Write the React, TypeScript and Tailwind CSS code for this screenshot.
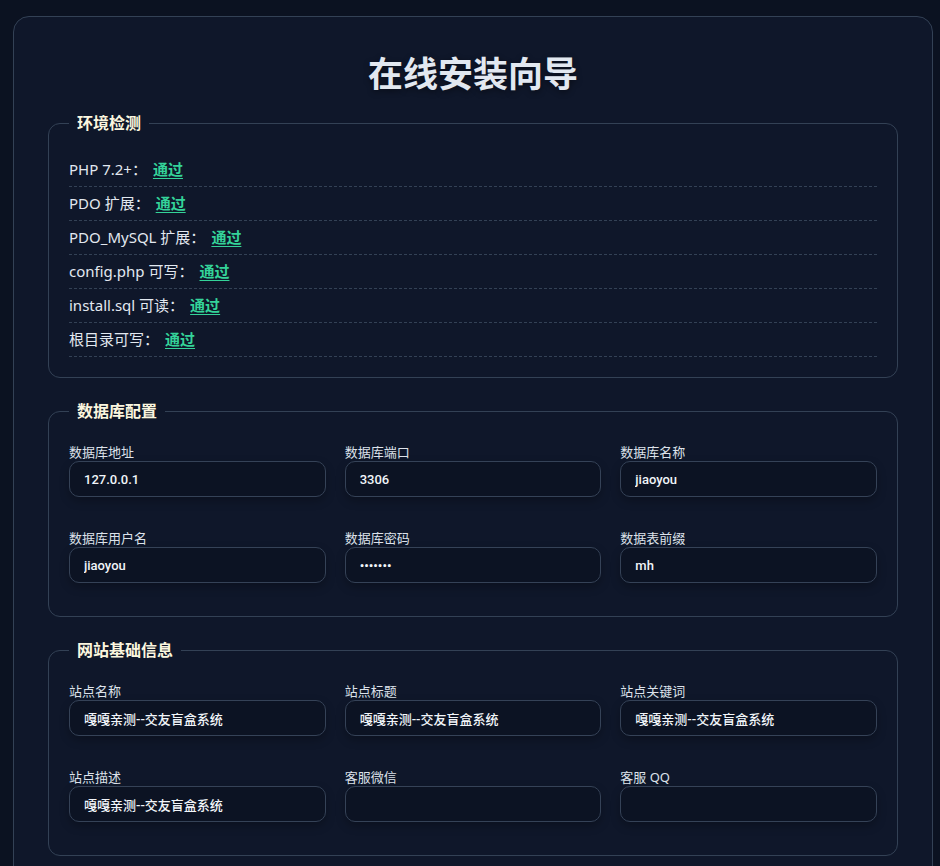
import type { ReactNode } from "react";

const CHECKS = [
  "PHP 7.2+：",
  "PDO 扩展：",
  "PDO_MySQL 扩展：",
  "config.php 可写：",
  "install.sql 可读：",
  "根目录可写：",
];

interface Field {
  label: string;
  value: string;
  type?: string;
}

const DB_FIELDS: Field[] = [
  { label: "数据库地址", value: "127.0.0.1" },
  { label: "数据库端口", value: "3306" },
  { label: "数据库名称", value: "jiaoyou" },
  { label: "数据库用户名", value: "jiaoyou" },
  { label: "数据库密码", value: "1234567", type: "password" },
  { label: "数据表前缀", value: "mh" },
];

const SITE_FIELDS: Field[] = [
  { label: "站点名称", value: "嘎嘎亲测--交友盲盒系统" },
  { label: "站点标题", value: "嘎嘎亲测--交友盲盒系统" },
  { label: "站点关键词", value: "嘎嘎亲测--交友盲盒系统" },
  { label: "站点描述", value: "嘎嘎亲测--交友盲盒系统" },
  { label: "客服微信", value: "" },
  { label: "客服 QQ", value: "" },
];

const cjk = "font-['Noto_Sans','Noto_Sans_CJK_SC',sans-serif]";

function Section({ title, children, top }: { title: string; children: ReactNode; top: string }) {
  return (
    <fieldset className={`mb-[22px] rounded-xl border border-[#334155] px-5 ${top}`}>
      <legend className="ml-0 px-2 text-base font-bold leading-[22px] text-[#fbf6df]">
        {title}
      </legend>
      {children}
    </fieldset>
  );
}

function FieldGrid({ fields }: { fields: Field[] }) {
  return (
    <div className="grid grid-cols-3 gap-x-[19px] gap-y-[32px] pb-[33px]">
      {fields.map((f) => (
        <label key={f.label} className="block">
          <span className="block text-[13px] leading-[18px] text-[#dde2ea]">{f.label}</span>
          <input
            type={f.type ?? "text"}
            defaultValue={f.value}
            className="block h-9 w-full rounded-[10px] border border-[#354257] bg-[#0c1323] px-[14px] font-['Roboto','Noto_Sans_CJK_SC',sans-serif] text-[13px] font-medium text-[#f1f5f9] shadow-[0_4px_10px_rgba(0,0,0,0.25)] outline-none"
          />
        </label>
      ))}
    </div>
  );
}

export default function App() {
  return (
    <div className={`min-h-screen bg-[#0b1221] pt-4 pl-[13px] ${cjk}`}>
      <div className="w-[920px] rounded-2xl border border-[#334155] bg-[#0f172a] px-[34px] pt-[36px] pb-10">
        <h1 className="mb-[17px] text-center text-[35px] font-bold leading-[42px] text-[#e2e8f0] [text-shadow:0_2px_6px_rgba(0,0,0,0.45)]">
          在线安装向导
        </h1>

        {/* 环境检测 */}
        <Section title="环境检测" top="pt-[19px] pb-5">
          {CHECKS.map((c) => (
            <div
              key={c}
              className="border-b border-dashed border-[#334155] py-[7px] text-[15px] leading-[19px] text-[#e2e8f0]"
            >
              {c}
              <span className="ml-[6px] font-bold text-[#34d399] underline decoration-1 underline-offset-[3px]">通过</span>
            </div>
          ))}
        </Section>

        {/* 数据库配置 */}
        <Section title="数据库配置" top="pt-[21px]">
          <FieldGrid fields={DB_FIELDS} />
        </Section>

        {/* 网站基础信息 */}
        <Section title="网站基础信息" top="pt-[21px]">
          <FieldGrid fields={SITE_FIELDS} />
        </Section>
      </div>
    </div>
  );
}
